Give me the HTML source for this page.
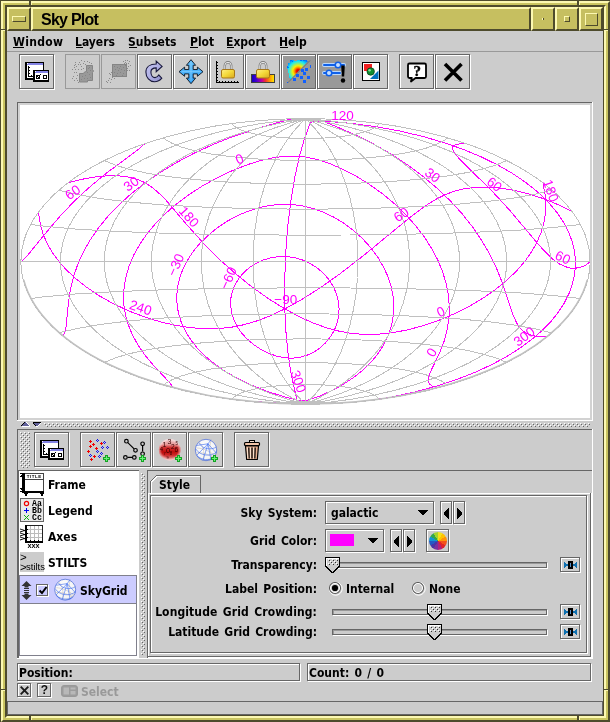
<!DOCTYPE html>
<html><head><meta charset="utf-8"><title>Sky Plot</title>
<style>
html,body{margin:0;padding:0}
body{width:610px;height:722px;position:relative;overflow:hidden;background:#cac561}
div,svg{position:absolute;box-sizing:content-box}
.t{font:bold 12px "DejaVu Sans Condensed","DejaVu Sans","Liberation Sans",sans-serif;word-spacing:1.5px;color:#000;white-space:nowrap;line-height:14px}
.t u{text-decoration:none;position:relative}
.t u:after{content:"";position:absolute;left:0;right:1px;top:12px;height:1px;background:#000}
.r{text-align:right}
.title{font:bold 16px "Liberation Sans",sans-serif;letter-spacing:-.75px;color:#000;white-space:nowrap;line-height:18px}
</style></head><body><div id="w" style="left:0;top:0;width:610px;height:722px;will-change:transform">
<div style="left:0px;top:0px;width:610px;height:722px;background:#cac561"></div>
<div style="left:0px;top:0px;width:610px;height:1px;background:#4e4b2c"></div>
<div style="left:0px;top:0px;width:1px;height:722px;background:#4e4b2c"></div>
<div style="left:1px;top:1px;width:605px;height:717px;border:2px solid;border-color:#fcf8b2 #4e4b2c #4e4b2c #fcf8b2"></div>
<div style="left:5px;top:5px;width:597px;height:709px;border:2px solid;border-color:#4e4b2c #fcf8b2 #fcf8b2 #4e4b2c"></div>
<div style="left:603px;top:5px;width:1px;height:711px;background:#4e4b2c"></div>
<div style="left:5px;top:715px;width:599px;height:1px;background:#4e4b2c"></div>
<div style="left:29px;top:1px;width:2px;height:4px;background:#4e4b2c"></div>
<div style="left:31px;top:1px;width:1px;height:4px;background:#fcf8b2"></div>
<div style="left:29px;top:716px;width:2px;height:4px;background:#4e4b2c"></div>
<div style="left:31px;top:716px;width:1px;height:4px;background:#fcf8b2"></div>
<div style="left:577px;top:1px;width:2px;height:4px;background:#4e4b2c"></div>
<div style="left:579px;top:1px;width:1px;height:4px;background:#fcf8b2"></div>
<div style="left:577px;top:716px;width:2px;height:4px;background:#4e4b2c"></div>
<div style="left:579px;top:716px;width:1px;height:4px;background:#fcf8b2"></div>
<div style="left:1px;top:29px;width:4px;height:1px;background:#4e4b2c"></div>
<div style="left:1px;top:30px;width:4px;height:1px;background:#fcf8b2"></div>
<div style="left:604px;top:29px;width:4px;height:1px;background:#4e4b2c"></div>
<div style="left:604px;top:30px;width:4px;height:1px;background:#fcf8b2"></div>
<div style="left:1px;top:689px;width:4px;height:1px;background:#4e4b2c"></div>
<div style="left:1px;top:690px;width:4px;height:1px;background:#fcf8b2"></div>
<div style="left:604px;top:689px;width:4px;height:1px;background:#4e4b2c"></div>
<div style="left:604px;top:690px;width:4px;height:1px;background:#fcf8b2"></div>
<div style="left:7px;top:7px;width:20px;height:20px;background:#c6bf60;border:2px solid;border-color:#fcf8b2 #4e4b2c #4e4b2c #fcf8b2"></div>
<div style="left:31px;top:7px;width:496px;height:20px;background:#c6bf60;border:2px solid;border-color:#fcf8b2 #4e4b2c #4e4b2c #fcf8b2"></div>
<div style="left:531px;top:7px;width:20px;height:20px;background:#c6bf60;border:2px solid;border-color:#fcf8b2 #4e4b2c #4e4b2c #fcf8b2"></div>
<div style="left:555px;top:7px;width:20px;height:20px;background:#c6bf60;border:2px solid;border-color:#fcf8b2 #4e4b2c #4e4b2c #fcf8b2"></div>
<div style="left:579px;top:7px;width:20px;height:20px;background:#c6bf60;border:2px solid;border-color:#fcf8b2 #4e4b2c #4e4b2c #fcf8b2"></div>
<div style="left:12px;top:16px;width:12px;height:4px;border:1px solid;border-color:#fcf8b2 #4e4b2c #4e4b2c #fcf8b2"></div>
<div style="left:542px;top:18px;width:1px;height:2px;background:#fcf8b2"></div>
<div style="left:543px;top:18px;width:1px;height:2px;background:#4e4b2c"></div>
<div style="left:564px;top:16px;width:4px;height:4px;border:1px solid;border-color:#fcf8b2 #4e4b2c #4e4b2c #fcf8b2"></div>
<div style="left:585px;top:13px;width:11px;height:11px;border:1px solid;border-color:#fcf8b2 #4e4b2c #4e4b2c #fcf8b2"></div>
<div class="title" style="left:41px;top:11px;">Sky Plot</div>
<div style="left:7px;top:31px;width:596px;height:684px;background:#cccccc"></div>
<div class="t" style="left:13px;top:35px;letter-spacing:.3px">Window</div>
<div style="left:13px;top:47px;width:11px;height:1px;background:#000"></div>
<div class="t" style="left:75px;top:35px;">Layers</div>
<div style="left:76px;top:47px;width:7px;height:1px;background:#000"></div>
<div class="t" style="left:128px;top:35px;">Subsets</div>
<div style="left:129px;top:47px;width:8px;height:1px;background:#000"></div>
<div class="t" style="left:190px;top:35px;">Plot</div>
<div style="left:190px;top:47px;width:8px;height:1px;background:#000"></div>
<div class="t" style="left:226px;top:35px;">Export</div>
<div style="left:227px;top:47px;width:7px;height:1px;background:#000"></div>
<div class="t" style="left:279px;top:35px;">Help</div>
<div style="left:280px;top:47px;width:8px;height:1px;background:#000"></div>
<div style="left:7px;top:51px;width:596px;height:1px;background:#999999"></div>
<div style="left:20px;top:55px;width:33px;height:33px;border:1px solid #ffffff"></div>
<div style="left:19px;top:54px;width:33px;height:33px;border:1px solid #666666"></div>
<svg style="left:19px;top:54px" width="36" height="36" viewBox="0 0 36 36"><rect x="6" y="8" width="19" height="18" fill="#000"/><rect x="8" y="9" width="16" height="2" fill="#8484e4"/><rect x="8" y="11" width="16" height="13" fill="#fff"/><rect x="8" y="9" width="1" height="1" fill="#fff"/><rect x="9" y="12" width="1" height="11" fill="#000"/><path d="M10 13h1v1h-1zM10 16h1v1h-1zM10 19h1v1h-1zM12 21h1v1h-1z" fill="#000"/><rect x="9" y="22" width="5" height="1" fill="#000"/><rect x="14" y="16" width="16" height="12" fill="#000"/><rect x="16" y="17" width="13" height="2" fill="#8484e4"/><rect x="16" y="19" width="13" height="7" fill="#fff"/><rect x="16" y="17" width="1" height="1" fill="#fff"/><rect x="17" y="21" width="4" height="4" fill="#000"/><path d="M18 23h1v1h-1zM19 22h1v1h-1zM21 20h1v1h-1z" fill="#fff"/><path d="M21 20h1v1h-1z" fill="#000"/><rect x="24" y="21" width="4" height="4" fill="#000"/><rect x="25" y="22" width="2" height="2" fill="#fff"/></svg>
<div style="left:65px;top:54px;width:33px;height:33px;border:1px solid #999999"></div>
<svg style="left:65px;top:54px" width="36" height="36" viewBox="0 0 36 36"><path d="M21.5 11.5h6v4l1 1.5-1 1.5v8h-5v1.5h-8v-8.500h4l1-1.500 2-.5z" fill="#999" stroke="#858585" stroke-width="1"/><path d="M16 6h1v1h-1zM19 7h1v1h-1zM22 7h1v1h-1zM24 8h1v1h-1zM26 9h1v1h-1zM10 8h1v1h-1zM14 8h1v1h-1zM13 10h1v1h-1zM18 9h1v1h-1zM9 11h1v1h-1zM11 12h1v1h-1zM16 12h1v1h-1zM9 13h1v1h-1zM7 15h1v1h-1zM10 15h1v1h-1zM13 15h1v1h-1zM16 15h1v1h-1zM18 14h1v1h-1zM9 18h1v1h-1zM11 18h1v1h-1zM12 21h1v1h-1zM8 22h1v1h-1zM7 24h1v1h-1zM11 24h1v1h-1zM9 26h1v1h-1zM12 26h1v1h-1zM13 28h1v1h-1zM10 10h1v1h-1zM15 10h1v1h-1zM20 10h1v1h-1z" fill="#8a8a8a"/><path d="M23 14h1v1h-1zM25 16h1v1h-1zM22 18h1v1h-1zM24 20h1v1h-1zM20 21h1v1h-1zM17 22h1v1h-1zM19 24h1v1h-1zM22 24h1v1h-1zM16 25h1v1h-1zM25 23h1v1h-1zM21 16h1v1h-1zM24 13h1v1h-1z" fill="#848484"/></svg>
<div style="left:101px;top:54px;width:33px;height:33px;border:1px solid #999999"></div>
<svg style="left:101px;top:54px" width="36" height="36" viewBox="0 0 36 36"><rect x="11.5" y="10.5" width="14" height="12" fill="#999" stroke="#858585"/><path d="M5 27h1v1h-1zM6 28h1v1h-1zM7 26h1v1h-1zM9 28h1v1h-1zM8 24h1v1h-1zM10 25h1v1h-1zM11 23h1v1h-1zM13 24h1v1h-1zM9 20h1v1h-1zM10 18h1v1h-1zM8 19h1v1h-1zM22 7h1v1h-1zM24 6h1v1h-1zM26 6h1v1h-1zM28 7h1v1h-1zM23 9h1v1h-1zM25 9h1v1h-1zM27 9h1v1h-1zM29 11h1v1h-1zM27 12h1v1h-1zM26 14h1v1h-1zM28 16h1v1h-1zM26 16h1v1h-1zM24 8h1v1h-1zM22 10h1v1h-1z" fill="#8a8a8a"/><path d="M13 12h1v1h-1zM16 13h1v1h-1zM19 12h1v1h-1zM22 13h1v1h-1zM14 15h1v1h-1zM17 16h1v1h-1zM20 15h1v1h-1zM23 16h1v1h-1zM13 18h1v1h-1zM16 19h1v1h-1zM19 18h1v1h-1zM22 19h1v1h-1zM15 21h1v1h-1zM21 21h1v1h-1zM24 11h1v1h-1zM18 14h1v1h-1z" fill="#848484"/></svg>
<div style="left:138px;top:55px;width:33px;height:33px;border:1px solid #ffffff"></div>
<div style="left:137px;top:54px;width:33px;height:33px;border:1px solid #666666"></div>
<svg style="left:137px;top:54px" width="36" height="36" viewBox="0 0 36 36"><defs><linearGradient id="rg" x1="0" y1="0" x2="1" y2="1"><stop offset="0" stop-color="#c8c8f4"/><stop offset=".5" stop-color="#b0b0e4"/><stop offset="1" stop-color="#8c8cc8"/></linearGradient></defs><path d="M19.200 7.100L25.100 12.400L19.200 17.700V13.900C16 13.900 13.900 15.500 13.900 18C13.900 21 15.500 23.600 18 23.600C19.500 23.600 20.800 22.500 21.800 21L24.800 24.200C23 26.500 20.500 27.800 17.500 27.800C12.500 27.800 8.900 23.500 8.900 18C8.900 13 13 10 19.200 10Z" fill="url(#rg)" stroke="#18183c" stroke-width="1.100" stroke-linejoin="miter"/></svg>
<div style="left:174px;top:55px;width:33px;height:33px;border:1px solid #ffffff"></div>
<div style="left:173px;top:54px;width:33px;height:33px;border:1px solid #666666"></div>
<svg style="left:173px;top:54px" width="36" height="36" viewBox="0 0 36 36"><defs><linearGradient id="mg" x1="0" y1="0" x2="0" y2="1"><stop offset="0" stop-color="#68c4ff"/><stop offset="1" stop-color="#2c9cf4"/></linearGradient></defs><path d="M18 5.700L22.600 11.300H20.200V15.500H24.400V13.100L30 17.700L24.400 22.300V19.900H20.200V24.100H22.600L18 29.700L13.400 24.100H15.800V19.900H11.600V22.300L6 17.700L11.600 13.100V15.500H15.800V11.300H13.400Z" fill="url(#mg)" stroke="#0c1420" stroke-width=".9" stroke-linejoin="miter"/><path d="M18 8v19M8.500 17.700h19" stroke="#9cdcff" stroke-width=".8" opacity=".7"/></svg>
<div style="left:210px;top:55px;width:33px;height:33px;border:1px solid #ffffff"></div>
<div style="left:209px;top:54px;width:33px;height:33px;border:1px solid #666666"></div>
<svg style="left:209px;top:54px" width="36" height="36" viewBox="0 0 36 36"><g shape-rendering="crispEdges"><rect x="7" y="7" width="1" height="22" fill="#000"/><rect x="7" y="28" width="23" height="1" fill="#000"/><path d="M8 8h1v1h-1zM8 11h1v1h-1zM8 14h1v1h-1zM8 17h1v1h-1zM8 20h1v1h-1zM8 23h1v1h-1zM8 26h1v1h-1zM10 27h1v1h-1zM13 27h1v1h-1zM16 27h1v1h-1zM19 27h1v1h-1zM22 27h1v1h-1zM25 27h1v1h-1zM28 27h1v1h-1z" fill="#000"/></g><path d="M15.8 15.500 V11.500 a3.200 3.200 0 0 1 6.400 0 V15.500" fill="none" stroke="#7c7c7c" stroke-width="2.400"/><path d="M15.8 15.500 V11.500 a3.200 3.200 0 0 1 6.400 0 V15.500" fill="none" stroke="#e8e8e8" stroke-width="1"/><defs><linearGradient id="pg19" x1="0" y1="0" x2="1" y2="1"><stop offset="0" stop-color="#fff088"/><stop offset=".5" stop-color="#f4d838"/><stop offset="1" stop-color="#d8a820"/></linearGradient></defs><rect x="12.5" y="15.500" width="13" height="8.500" rx="1.500" fill="url(#pg19)" stroke="#a87818" stroke-width="1"/></svg>
<div style="left:246px;top:55px;width:33px;height:33px;border:1px solid #ffffff"></div>
<div style="left:245px;top:54px;width:33px;height:33px;border:1px solid #666666"></div>
<svg style="left:245px;top:54px" width="36" height="36" viewBox="0 0 36 36"><defs><linearGradient id="ramp" x1="0" y1="0" x2="1" y2="0"><stop offset="0" stop-color="#1000c0"/><stop offset=".2" stop-color="#4000d0"/><stop offset=".45" stop-color="#c000a0"/><stop offset=".6" stop-color="#f03030"/><stop offset=".8" stop-color="#ff9800"/><stop offset="1" stop-color="#fff000"/></linearGradient></defs><rect x="6.500" y="20.500" width="23" height="8" fill="url(#ramp)" stroke="#404040" stroke-width="1" shape-rendering="crispEdges"/><path d="M14.8 15.500 V11.500 a3.200 3.200 0 0 1 6.400 0 V15.500" fill="none" stroke="#7c7c7c" stroke-width="2.400"/><path d="M14.8 15.500 V11.500 a3.200 3.200 0 0 1 6.400 0 V15.500" fill="none" stroke="#e8e8e8" stroke-width="1"/><defs><linearGradient id="pg18" x1="0" y1="0" x2="1" y2="1"><stop offset="0" stop-color="#fff088"/><stop offset=".5" stop-color="#f4d838"/><stop offset="1" stop-color="#d8a820"/></linearGradient></defs><rect x="11.5" y="15.500" width="13" height="8.500" rx="1.500" fill="url(#pg18)" stroke="#a87818" stroke-width="1"/></svg>
<div style="left:283px;top:56px;width:32px;height:32px;background:#999999"></div>
<div style="left:282px;top:55px;width:33px;height:33px;border:1px solid #ffffff"></div>
<div style="left:281px;top:54px;width:33px;height:33px;border:1px solid #666666"></div>
<svg style="left:281px;top:54px" width="36" height="36" viewBox="0 0 36 36"><defs><radialGradient id="dg" cx="17.200" cy="17.200" r="13.500" gradientUnits="userSpaceOnUse"><stop offset="0" stop-color="#c80000"/><stop offset=".14" stop-color="#f01000"/><stop offset=".27" stop-color="#ff9000"/><stop offset=".4" stop-color="#f8f000"/><stop offset=".55" stop-color="#90f070"/><stop offset=".72" stop-color="#20e8f0"/><stop offset=".9" stop-color="#00a0ff"/><stop offset="1" stop-color="#0060ff"/></radialGradient></defs><path d="M9 6h4v1h3v-1h9v1h2L9 26v-2h-1v-5h-1v-4h-1v-3h1v-3h2z" fill="url(#dg)"/><path d="M9 6h1v1h-1zM10 6h1v1h-1zM11 7h1v1h-1zM6 12h1v1h-1zM6 13h1v1h-1zM7 13h1v1h-1zM25 6h1v1h-1zM22 6h1v1h-1zM23 6h1v1h-1zM19 6h1v1h-1zM20 6h1v1h-1z" fill="#0070ff"/><path d="M6.500 29L29 6.500" stroke="#606060" stroke-width=".7"/><rect x="24" y="14" width="3" height="3" fill="#1060ff"/><rect x="22" y="18" width="3" height="3" fill="#1060ff"/><rect x="19" y="22" width="3" height="3" fill="#1060ff"/><rect x="26" y="22" width="3" height="3" fill="#1060ff"/><rect x="22" y="26" width="3" height="3" fill="#1060ff"/><rect x="12" y="24" width="3" height="3" fill="#1060ff"/><rect x="15" y="20" width="3" height="3" fill="#1060ff"/><rect x="20" y="15" width="3" height="3" fill="#1060ff"/><rect x="29" y="11" width="1" height="3" fill="#1060ff"/><rect x="6" y="28" width="1" height="1" fill="#1060ff"/></svg>
<div style="left:319px;top:56px;width:32px;height:32px;background:#999999"></div>
<div style="left:318px;top:55px;width:33px;height:33px;border:1px solid #ffffff"></div>
<div style="left:317px;top:54px;width:33px;height:33px;border:1px solid #666666"></div>
<svg style="left:317px;top:54px" width="36" height="36" viewBox="0 0 36 36"><g shape-rendering="auto"><path d="M7 11h20M7 19h16" stroke="#b8d8ff" stroke-width="4" stroke-linecap="round"/><path d="M7 11h20M7 19h16" stroke="#1060e8" stroke-width="2" stroke-linecap="round"/><circle cx="21" cy="11" r="2.800" fill="#c8e0ff" stroke="#1060e8" stroke-width="1.600"/><circle cx="12" cy="19" r="2.800" fill="#c8e0ff" stroke="#1060e8" stroke-width="1.600"/><path d="M24.200 11.500h3.600l-.6 11h-2.400z" fill="#000"/><circle cx="26" cy="26.500" r="2.200" fill="#000"/></g></svg>
<div style="left:354px;top:55px;width:33px;height:33px;border:1px solid #ffffff"></div>
<div style="left:353px;top:54px;width:33px;height:33px;border:1px solid #666666"></div>
<svg style="left:353px;top:54px" width="36" height="36" viewBox="0 0 36 36"><rect x="9.500" y="8.500" width="17" height="18" fill="#fff" stroke="#000"/><rect x="11" y="10" width="8" height="7" fill="#f02020"/><path d="M17 25h8.500v-8.500z" fill="#0070c0"/><g shape-rendering="auto"><circle cx="17.700" cy="17.500" r="3.700" fill="#109030" stroke="#084018" stroke-width=".8"/><circle cx="16.600" cy="16.300" r="1.200" fill="#90e0a0"/></g></svg>
<div style="left:400px;top:55px;width:33px;height:33px;border:1px solid #ffffff"></div>
<div style="left:399px;top:54px;width:33px;height:33px;border:1px solid #666666"></div>
<svg style="left:399px;top:54px" width="36" height="36" viewBox="0 0 36 36"><g shape-rendering="auto"><path d="M10.500 9.500h15a1.500 1.500 0 0 1 1.500 1.500v11.500a1.500 1.500 0 0 1-1.500 1.500h-9l-4.500 3.500.8-3.500h-2.300a1.500 1.500 0 0 1-1.500-1.500V11a1.500 1.500 0 0 1 1.500-1.500z" fill="#fff" stroke="#000" stroke-width="1.800" stroke-linejoin="round"/></g><text x="18.200" y="22" text-anchor="middle" font-family="Liberation Serif, serif" font-weight="bold" font-size="15" fill="#000" stroke="#000" stroke-width=".4">?</text></svg>
<div style="left:436px;top:55px;width:33px;height:33px;border:1px solid #ffffff"></div>
<div style="left:435px;top:54px;width:33px;height:33px;border:1px solid #666666"></div>
<svg style="left:435px;top:54px" width="36" height="36" viewBox="0 0 36 36"><g shape-rendering="auto"><path d="M10 10L26.500 26.500M26.500 10L10 26.500" stroke="#000" stroke-width="3.600"/></g></svg>
<div style="left:17px;top:102px;width:576px;height:319px;background:#d2d2d2"></div>
<div style="left:17px;top:102px;width:575px;height:1px;background:#666666"></div>
<div style="left:17px;top:102px;width:1px;height:318px;background:#666666"></div>
<div style="left:592px;top:102px;width:1px;height:319px;background:#ffffff"></div>
<div style="left:17px;top:420px;width:576px;height:1px;background:#ffffff"></div>
<div style="left:20px;top:105px;width:570px;height:313px;background:#ffffff"></div>
<svg style="left:20px;top:105px" width="570" height="313" viewBox="20 105 570 313" shape-rendering="crispEdges"><path d="M284.8 308.9 299.7 316.9 313.7 323.2 327.1 328 340 331.4 352.3 333.5 365 334.4 378.1 334.2 392 332.8 406.9 330 422.5 325.9 438.6 320.4 454.5 313.7 469.3 306.3 483.4 297.9 496 289.1 507.2 280 516.7 270.7 524.8 261.4 531.5 251.9 536.8 242.5 540.9 233 543.7 223.5 545.3 214.1 545.7 204.6 545.5 199.4M284.8 308.9 301.3 299.8 319.6 288.2 340.4 273.5 364.1 255.1 410.2 217.2 424.4 206.5 435.3 199.6 445 194.7 454.4 191.2 464.1 188.8 474.6 187.4 486.5 187.1 499.2 188 513.3 190.2 528 193.7 543 198.5 545.5 199.4M284.8 308.9 284.7 281.6 285.7 253.4 287.8 225.8 291 199.8 295 176.1 299.6 155.6 304.6 138.4 309 126.3 310.9 122.7 312.5 121.6 315.5 121 328.5 121.4 352.4 123.5 376.5 126.8 400.1 131.1 422.9 136.5 443.5 142.5 463.1 149.3 481.4 157 497.5 164.9 512.4 173.4 525.1 182 536.5 191 545.5 199.4M284.8 308.9 268.8 298.9 252.2 287.1 235.9 274 219.6 259.5 204 243.8 187.8 225.8 165.4 199.6 157.1 191.4 150.1 185.9 143.2 181.8 136 178.9 127.9 176.9 118.3 175.8 107.1 175.8 94.2 177.1 80.2 179.6 68.6 182.6M542.9 182.7 545 194 545.5 199.4M284.8 308.9 270.1 315.9 256.6 321 243.6 324.8 231.1 327.3 218.2 328.6 204.7 328.8 190.8 327.7 175.9 325.4 160.2 321.8 144.4 316.9 128.7 310.9 113.6 303.8 99.6 296 87.1 287.6 76 278.9 66.5 270 58.5 261 52 252 47 243.1 43.1 234.1 40.5 225 39 216 38.7 212M572.2 211.7 559 205 545.5 199.4M284.8 308.9 286.1 334.2 288.4 356.6 291.5 375.8 295.3 392.7 297.1 400.2 296.8 401.5 295.3 402.2 288.9 402.7 266.9 402.3 243.1 400.8M369.1 400.7 392.3 396.9 414.7 392 436.2 386.2 456.5 379.6 474.7 372.5 491.6 364.7 507.1 356.3 520.5 347.8 532.6 338.8 542.7 330 551.5 320.8 558.5 311.9 564.4 302.8 569 293.6 572.2 284.8 574.3 276 575.4 267.1 575.3 258.2 574.1 249.3 571.8 240.5 568.2 231.1 563.3 222 557.3 213 549.6 203.7 545.5 199.4M334.4 330.1 337.1 323.1 338.7 315.9 339.1 308.7 338.4 301.3 336.5 293.8 333.4 286.8 329.2 280 324 273.9 317.8 268.4 310.8 263.8 303.5 260.3 295.7 257.9 287.7 256.6 279.6 256.5 271.6 257.6 263.8 259.8 256.4 263.1 249.6 267.4 243.8 272.5 238.9 278.2 235.1 284.6 232.4 291.2 230.9 298 230.6 304.8 231.4 311.7 233.4 318.6 236.5 325.4 241 332.2 246.6 338.5 253.4 344.4 261 349.5 269.1 353.5 277.2 356.3 285.1 357.9 292.6 358.2 299.9 357.3 306.9 355.3 313.6 352.2 319.9 348 325.6 342.8 330.5 336.7 334.4 330.1M389.1 333.2 391.8 324.1 393.4 314.9 393.8 305.4 393 295.9 391 286.2 387.8 276.3 383.4 266.7 377.7 257.1 370.8 247.7 362.8 238.9 354 230.8 344.3 223.5 334.1 217.3 323.6 212.3 313.2 208.5 302.9 206 292.3 204.5 281.7 204.3 270.9 205.3 260.2 207.4 249.1 210.8 238 215.4 227.2 221.2 217 228 207.7 235.7 199.5 243.8 192.6 252.3 187.1 260.9 182.6 269.8 179.4 278.8 177.5 287.6 176.7 296.5 177.1 305.2 178.6 313.9 181.4 322.6 185.4 331.2 190.7 339.7 197.3 348.1 205.3 356.2 214.6 364 225.4 371.5 237.6 378.6 251.2 385.1 266.8 391.3 283.7 396.6 297.7 400.1 303.6 400.7 308.2 400.1 317.6 396.9 330.8 391.1 342.9 384.6 353.6 377.5 363 370.1 371 362.2 377.7 354.1 383.2 345.7 387.5 337.2 389.1 333.2M449.1 316.2 449.2 305.1 448.2 294 445.9 282.7 442.5 271.4 437.8 260.1 431.7 248.6 424.5 237.2 415.7 225.8 405.8 214.7 394.4 203.7 382 193.4 368.6 183.8 354.9 175.5 341.3 168.5 328.5 163.1 317 159.4 306.5 157.2 296.4 156.1 286.1 156.2 274.9 157.5 262.3 160.1 248.2 164.4 232.9 170.3 217.3 177.7 202.2 186.1 188.5 195 175.8 204.5 164.7 214.3 154.7 224.6 146.3 234.8 139.2 245.3 133.5 255.5 129.1 266 126.1 276.1 124.2 286.2 123.5 296.3 124 305.9 125.7 315.9 128.6 325.6 132.5 335.1 137.8 344.7 144.5 354.5 153.2 365 170 383 172.8 387.2 173 387.8M437.9 387.9 432.8 386.3 430 384.5 428.6 382.5 428.1 379.9 428.8 376 431.9 368.8 440.1 351.8 444.3 340.7 447.1 330 448.8 319.4 449.1 316.2M502.7 283.8 496.6 268.4 489.6 254.1 481.8 240.6 472.8 227.3 462.3 214 450.7 201.3 437.7 188.8 423.4 176.7 408.2 165.3 391.8 154.5 374.1 144.3 355.9 135.2 336.2 126.6 320.4 120.2 319.6 119.5 320 118.9 290.5 119 278.6 122.4 255.1 129.1 233.7 136.3 213.3 144.4 194.1 153.2 176.2 162.7 159.7 172.7 144.6 183.2 130.9 194 118.6 205.2 107.7 216.6 98.3 228.2 90.3 239.8 83.7 251.4 78.2 263.2 74 275.2 70.8 287.5 68.6 301.2 66 326.7 64.5 333.1 63.1 336.3M547.6 336.4 539.7 336.6 533.3 335.8 528.1 334.1 523.8 331.5 520 327.9 516.7 322.9 513.2 315.3 506.9 296.3 502.7 283.8M536.8 242.5 509.8 210.4 492.8 191.9 470.9 170.3 458.2 157.5 454 152.1 452.6 149 452.7 147 453.8 145.5 456.4 144.3 461.7 143.6 465.8 143.6M144.9 143.6 138.4 149.3 105.6 173.8 89 187.6 74.2 201.3 60.4 215.8 46.1 232.6 28.1 254.7 21.3 261.6 20.9 262M590 262.1 585.3 265.3 580.3 267.4 575.3 268.2 570.1 268 564.7 266.5 559 263.7 552.7 259.1 545 251.7 536.8 242.5" fill="none" stroke="#ff00ff" stroke-width="1"/><path d="M305.5 404.3 330.3 403.8 354.9 402.2 379.2 399.5 402.8 395.7 425.8 391 447.8 385.2 468.7 378.5 484.6 372.5 499.6 366 513.6 358.9 526.7 351.4 538.6 343.4 549.4 335.1 559.1 326.3 567.5 317.3 574.6 308 579.1 300.9 582.8 293.6 585.8 286.3 588 278.9 589.4 271.5 590.1 264 589.9 256.5 589 249.1 587.3 241.6 584.9 234.2 581.6 226.9 577.7 219.7 572.9 212.6 565.5 203.4 556.8 194.4 546.9 185.8 535.7 177.5 523.5 169.7 510.2 162.3 495.9 155.4 480.7 148.9 464.6 143.1 443.5 136.6 421.3 131 398.2 126.4 374.4 122.9 350 120.4 325.4 119 305.5 118.7M305.5 404.3 329.2 402.2 352.2 399.1 374.4 395.1 395.6 390.1 415.8 384.4 434.8 377.9 452.6 370.7 469.1 362.8 484.2 354.4 497.9 345.4 507.7 337.8 516.6 330 524.5 322 531.3 313.7 537.2 305.3 542 296.7 545.7 288 548.4 279.2 550 270.4 550.5 261.5 550 252.6 548.4 243.8 545.7 235 542 226.3 537.2 217.7 531.3 209.3 524.5 201 516.6 193 507.7 185.2 497.9 177.6 484.2 168.6 469.1 160.2 452.6 152.3 434.8 145.1 415.8 138.6 395.6 132.9 374.4 127.9 352.2 123.9 329.2 120.8 305.5 118.7M305.5 404.3 326.5 400.8 346.6 396.4 365.5 391.3 383.4 385.5 400.1 379.1 415.7 372.1 430.1 364.6 443.3 356.7 455.3 348.3 466 339.6 475.6 330.5 483.8 321.2 490.8 311.6 496.5 301.8 501 291.9 504.2 281.8 505.8 273.7 506.6 265.6 506.6 257.4 505.8 249.3 504.2 241.2 501 231.1 496.5 221.2 490.8 211.4 483.8 201.8 475.6 192.5 466 183.4 455.3 174.7 443.3 166.3 430.1 158.4 415.7 150.9 400.1 143.9 383.4 137.5 365.5 131.7 346.6 126.6 326.5 122.2 305.5 118.7M305.5 404.3 322.5 399.6 338.5 394.3 353.4 388.3 367.3 381.9 380.1 375.1 392 367.8 402.9 360.2 412.8 352.2 421.7 344 429.7 335.4 436.7 326.7 442.7 317.7 447.9 308.6 452.1 299.4 455.3 290 457.7 280.5 459.1 271 459.5 261.5 459.1 252 457.7 242.5 455.3 233 452.1 223.6 447.9 214.4 442.7 205.3 436.7 196.3 429.7 187.6 421.7 179 412.8 170.8 402.9 162.8 392 155.2 380.1 147.9 367.3 141.1 353.4 134.7 338.5 128.7 322.5 123.4 305.5 118.7M305.5 404.3 319.7 397.5 332.7 390.1 344.6 382.2 355.3 373.7 364.9 364.8 373.6 355.6 381.3 346 388 336.1 393.8 325.9 398.7 315.5 403.2 303.1 406.5 290.6 408.7 277.9 409.6 265.1 409.4 252.4 407.9 239.6 405.3 227 401.4 214.5 397.1 204 391.9 193.7 385.8 183.6 378.8 173.8 370.8 164.3 361.8 155.2 351.8 146.4 340.7 138.1 328.5 130.4 315.1 123.1 305.5 118.7M305.5 404.3 314 395.6 321.5 386.3 328.3 376.4 335 364.6 340.8 352.2 345.6 339.4 350.1 324.4 353.6 309 356.1 293.4 357.5 277.5 358 261.5 357.5 245.5 356.1 229.6 353.6 214 350.1 198.6 345.6 183.6 340.8 170.8 335 158.4 328.3 146.6 321.5 136.7 314 127.4 305.5 118.7M305.5 404.3 305.5 345.3 305.5 286.1 305.5 226.4 305.5 166.7 305.5 118.7M305.5 404.3 297 395.6 289.5 386.3 282.7 376.4 276 364.6 270.2 352.2 265.4 339.4 260.9 324.4 257.4 309 254.9 293.4 253.5 277.5 253 261.5 253.5 245.5 254.9 229.6 257.4 214 260.9 198.6 265.4 183.6 270.2 170.8 276 158.4 282.7 146.6 289.5 136.7 297 127.4 305.5 118.7M305.5 404.3 291.3 397.5 278.3 390.1 266.4 382.2 255.7 373.7 246.1 364.8 237.4 355.6 229.7 346 223 336.1 217.2 325.9 212.3 315.5 207.8 303.1 204.5 290.6 202.3 277.9 201.4 265.1 201.6 252.4 203.1 239.6 205.7 227 209.6 214.5 213.9 204 219.1 193.7 225.2 183.6 232.2 173.8 240.2 164.3 249.2 155.2 259.2 146.4 270.3 138.1 282.5 130.4 295.9 123.1 305.5 118.7M305.5 404.3 288.5 399.6 272.5 394.3 257.6 388.3 243.7 381.9 230.9 375.1 219 367.8 208.1 360.2 198.2 352.2 189.3 344 181.3 335.4 174.3 326.7 168.3 317.7 163.1 308.6 158.9 299.4 155.7 290 153.3 280.5 151.9 271 151.5 261.5 151.9 252 153.3 242.5 155.7 233 158.9 223.6 163.1 214.4 168.3 205.3 174.3 196.3 181.3 187.6 189.3 179 198.2 170.8 208.1 162.8 219 155.2 230.9 147.9 243.7 141.1 257.6 134.7 272.5 128.7 288.5 123.4 305.5 118.7M305.5 404.3 284.5 400.8 264.4 396.4 245.5 391.3 227.6 385.5 210.9 379.1 195.3 372.1 180.9 364.6 167.7 356.7 155.7 348.3 145 339.6 135.4 330.5 127.2 321.2 120.2 311.6 114.5 301.8 110 291.9 106.8 281.8 105.2 273.7 104.4 265.6 104.4 257.4 105.2 249.3 106.8 241.2 110 231.1 114.5 221.2 120.2 211.4 127.2 201.8 135.4 192.5 145 183.4 155.7 174.7 167.7 166.3 180.9 158.4 195.3 150.9 210.9 143.9 227.6 137.5 245.5 131.7 264.4 126.6 284.5 122.2 305.5 118.7M305.5 404.3 281.8 402.2 258.8 399.1 236.6 395.1 215.4 390.1 195.2 384.4 176.2 377.9 158.4 370.7 141.9 362.8 126.8 354.4 113.1 345.4 103.3 337.8 94.4 330 86.5 322 79.7 313.7 73.8 305.3 69 296.7 65.3 288 62.6 279.2 61 270.4 60.5 261.5 61 252.6 62.6 243.8 65.3 235 69 226.3 73.8 217.7 79.7 209.3 86.5 201 94.4 193 103.3 185.2 113.1 177.6 126.8 168.6 141.9 160.2 158.4 152.3 176.2 145.1 195.2 138.6 215.4 132.9 236.6 127.9 258.8 123.9 281.8 120.8 305.5 118.7M305.5 404.3 280.7 403.8 256.1 402.2 231.8 399.5 208.2 395.7 185.2 391 163.2 385.2 142.3 378.5 126.4 372.5 111.4 366 97.4 358.9 84.3 351.4 72.4 343.4 61.6 335.1 51.9 326.3 43.5 317.3 36.4 308 31.9 300.9 28.2 293.6 25.2 286.3 23 278.9 21.6 271.5 20.9 264 21.1 256.5 22 249.1 23.7 241.6 26.1 234.2 29.4 226.9 33.3 219.7 38.1 212.6 45.5 203.4 54.2 194.4 64.1 185.8 75.3 177.5 87.5 169.7 100.8 162.3 115.1 155.4 130.3 148.9 146.4 143.1 167.5 136.6 189.7 131 212.8 126.4 236.6 122.9 261 120.4 285.6 119 305.5 118.7M379.2 399.5 377.2 397 373.2 394.4 366.6 391.7 356.5 389 342.4 386.6 324.8 385 304.9 384.5 285.1 385.1 267.6 386.8 254.1 389.1 244.1 391.8 237.6 394.5 233.7 397.2 231.8 399.5M447.8 385.2 443 381.8 435.9 378.3 425.9 374.8 412.1 371.3 393.7 368.1 371.5 365.4 344.7 363.5 314.6 362.6 284.3 362.8 255.6 364.1 230.4 366.4 209.9 369.2 193.1 372.6 180.7 376.2 171.6 379.9 165.6 383.4 163.2 385.2M506.7 362.5 497.2 358.4 484.2 354.4 467.5 350.5 446.7 347 420.5 343.8 388.6 341.3 350.9 339.5 309.5 338.8 268 339.3 230.1 340.8 196.5 343.3 168.7 346.4 146.5 349.9 129.4 353.7 116.1 357.6 106.2 361.6 104.3 362.5M552 332.9 536.1 329 516 325.3 490.3 321.9 456.8 318.7 416.6 316.3 368.1 314.5 313.4 313.8 258.4 314.2 207.8 315.7 165.4 317.9 129.8 320.9 102.1 324.2 80.3 327.9 63.8 331.6 59 332.9M580.4 298.5 553.5 295.5 516.9 292.7 467.8 290.4 408.6 288.8 349.9 288 290.1 287.9 230.7 288.4 171.5 289.5 115.9 291.6 73.4 294.1 42.5 297 30.6 298.5M590.1 261.5 530.6 261.5 470.8 261.5 411.4 261.5 352.8 261.5 293.2 261.5 233.9 261.5 174.5 261.5 115 261.5 56.3 261.5 20.9 261.5M580.4 224.5 553.5 227.5 516.9 230.3 467.8 232.6 408.6 234.2 349.9 235 290.1 235.1 230.7 234.6 171.5 233.5 115.9 231.4 73.4 228.9 42.5 226 30.6 224.5M552 190.1 536.1 194 516 197.7 490.3 201.1 456.8 204.3 416.6 206.7 368.1 208.5 313.4 209.2 258.4 208.8 207.8 207.3 165.4 205.1 129.8 202.1 102.1 198.8 80.3 195.1 63.8 191.4 59 190.1M506.7 160.5 497.2 164.6 484.2 168.6 467.5 172.5 446.7 176 420.5 179.2 388.6 181.7 350.9 183.5 309.5 184.2 268 183.7 230.1 182.2 196.5 179.7 168.7 176.6 146.5 173.1 129.4 169.3 116.1 165.4 106.2 161.4 104.3 160.5M447.8 137.8 443 141.2 435.9 144.7 425.9 148.2 412.1 151.7 393.7 154.9 371.5 157.6 344.7 159.5 314.6 160.4 284.3 160.2 255.6 158.9 230.4 156.6 209.9 153.8 193.1 150.4 180.7 146.8 171.6 143.1 165.6 139.6 163.2 137.8M379.2 123.5 377.2 126 373.2 128.6 366.6 131.3 356.5 134 342.4 136.4 324.8 138 304.9 138.5 285.1 137.9 267.6 136.2 254.1 133.9 244.1 131.2 237.6 128.5 233.7 125.8 231.8 123.5" fill="none" stroke="#c0c0c0" stroke-width="1"/><path d="M23.71 280A284.19 142.43 0 0 0 587.29 280" fill="none" stroke="#c0c0c0" stroke-width="1.600" shape-rendering="auto"/><path d="M291 118h30v3h-30zM283 120h46v1h-46zM276 402h60v2h-60zM290 401h32v1h-32z" fill="#c0c0c0"/><g fill="#ff00ff" font-family="Liberation Sans, sans-serif" font-size="13.500"><text transform="translate(342.6,114.6) rotate(0)" y="4.900" text-anchor="middle">120</text><text transform="translate(72.5,192) rotate(-36)" y="4.900" text-anchor="middle">60</text><text transform="translate(131,183.6) rotate(-36)" y="4.900" text-anchor="middle">30</text><text transform="translate(239.5,158.9) rotate(-22)" y="4.900" text-anchor="middle">0</text><text transform="translate(189.2,216.6) rotate(48)" y="4.900" text-anchor="middle">180</text><text transform="translate(175.4,264.8) rotate(-66)" y="4.900" text-anchor="middle">−30</text><text transform="translate(228,278.1) rotate(-65)" y="4.900" text-anchor="middle">−60</text><text transform="translate(285.7,299.5) rotate(0)" y="4.900" text-anchor="middle">−90</text><text transform="translate(140.7,307.4) rotate(18.4)" y="4.900" text-anchor="middle">240</text><text transform="translate(298.6,381.3) rotate(71)" y="4.900" text-anchor="middle">300</text><text transform="translate(432.8,175) rotate(38)" y="4.900" text-anchor="middle">30</text><text transform="translate(401.1,214.4) rotate(-33)" y="4.900" text-anchor="middle">60</text><text transform="translate(494.6,184.2) rotate(37.5)" y="4.900" text-anchor="middle">60</text><text transform="translate(551.1,190.6) rotate(70.5)" y="4.900" text-anchor="middle">180</text><text transform="translate(563,257.2) rotate(25)" y="4.900" text-anchor="middle">60</text><text transform="translate(440.7,311.5) rotate(-24)" y="4.900" text-anchor="middle">0</text><text transform="translate(431.5,352.2) rotate(-60)" y="4.900" text-anchor="middle">0</text><text transform="translate(524.1,336.4) rotate(-37)" y="4.900" text-anchor="middle">300</text></g></svg>
<svg style="left:20px;top:421px" width="24" height="7" viewBox="0 0 24 7" shape-rendering="crispEdges"><rect x="5" y="1" width="1" height="1" fill="#62629a"/><rect x="4" y="2" width="3" height="1" fill="#62629a"/><rect x="3" y="3" width="5" height="1" fill="#62629a"/><rect x="2" y="4" width="7" height="1" fill="#62629a"/><path d="M4 1h1v1h-1zM3 2h1v1h-1zM2 3h1v1h-1zM1 4h1v1h-1z" fill="#000"/><rect x="2" y="5" width="8" height="1" fill="#fff"/><path d="M6 1h1v1h-1zM7 2h1v1h-1zM8 3h1v1h-1zM9 4h1v1h-1z" fill="#fff"/><rect x="13" y="1" width="8" height="1" fill="#000"/><rect x="14" y="2" width="6" height="1" fill="#62629a"/><rect x="15" y="3" width="4" height="1" fill="#62629a"/><rect x="16" y="4" width="2" height="1" fill="#62629a"/><path d="M13 2h1v1h-1zM14 3h1v1h-1zM15 4h1v1h-1z" fill="#000"/><path d="M20 2h1v1h-1zM19 3h1v1h-1zM18 4h1v1h-1zM17 5h1v1h-1zM16 5h1v1h-1z" fill="#fff"/></svg>
<svg style="left:44px;top:423px" width="546" height="4" viewBox="0 0 546 4" shape-rendering="crispEdges"><defs><pattern id="b44_423" x="0" y="0" width="4" height="4" patternUnits="userSpaceOnUse"><path d="M0 0h1v1h-1zM2 2h1v1h-1z" fill="#ffffff"/><path d="M1 1h1v1h-1zM3 3h1v1h-1z" fill="#666666"/></pattern></defs><rect width="546" height="4" fill="url(#b44_423)"/></svg>
<div style="left:17px;top:429px;width:575px;height:1px;background:#666666"></div>
<div style="left:17px;top:429px;width:1px;height:229px;background:#666666"></div>
<div style="left:592px;top:429px;width:1px;height:230px;background:#ffffff"></div>
<div style="left:17px;top:658px;width:576px;height:1px;background:#ffffff"></div>
<svg style="left:20px;top:432px" width="10" height="36" viewBox="0 0 10 36" shape-rendering="crispEdges"><defs><pattern id="b20_432" x="0" y="0" width="4" height="4" patternUnits="userSpaceOnUse"><path d="M0 0h1v1h-1zM2 2h1v1h-1z" fill="#ffffff"/><path d="M1 1h1v1h-1zM3 3h1v1h-1z" fill="#666666"/></pattern></defs><rect width="10" height="36" fill="url(#b20_432)"/></svg>
<div style="left:35px;top:433px;width:33px;height:33px;border:1px solid #ffffff"></div>
<div style="left:34px;top:432px;width:33px;height:33px;border:1px solid #666666"></div>
<svg style="left:34px;top:432px" width="36" height="36" viewBox="0 0 36 36"><rect x="6" y="8" width="19" height="18" fill="#000"/><rect x="8" y="9" width="16" height="2" fill="#8484e4"/><rect x="8" y="11" width="16" height="13" fill="#fff"/><rect x="8" y="9" width="1" height="1" fill="#fff"/><rect x="9" y="12" width="1" height="11" fill="#000"/><path d="M10 13h1v1h-1zM10 16h1v1h-1zM10 19h1v1h-1zM12 21h1v1h-1z" fill="#000"/><rect x="9" y="22" width="5" height="1" fill="#000"/><rect x="14" y="16" width="16" height="12" fill="#000"/><rect x="16" y="17" width="13" height="2" fill="#8484e4"/><rect x="16" y="19" width="13" height="7" fill="#fff"/><rect x="16" y="17" width="1" height="1" fill="#fff"/><rect x="17" y="21" width="4" height="4" fill="#000"/><path d="M18 23h1v1h-1zM19 22h1v1h-1zM21 20h1v1h-1z" fill="#fff"/><path d="M21 20h1v1h-1z" fill="#000"/><rect x="24" y="21" width="4" height="4" fill="#000"/><rect x="25" y="22" width="2" height="2" fill="#fff"/></svg>
<div style="left:81px;top:433px;width:33px;height:33px;border:1px solid #ffffff"></div>
<div style="left:80px;top:432px;width:33px;height:33px;border:1px solid #666666"></div>
<svg style="left:80px;top:432px" width="36" height="36" viewBox="0 0 36 36"><rect x="9" y="9" width="3" height="1" fill="#f00000"/><rect x="10" y="8" width="1" height="3" fill="#f00000"/><rect x="12" y="12" width="3" height="1" fill="#f00000"/><rect x="13" y="11" width="1" height="3" fill="#f00000"/><rect x="9" y="14" width="3" height="1" fill="#f00000"/><rect x="10" y="13" width="1" height="3" fill="#f00000"/><rect x="15" y="16" width="3" height="1" fill="#f00000"/><rect x="16" y="15" width="1" height="3" fill="#f00000"/><rect x="7" y="19" width="3" height="1" fill="#f00000"/><rect x="8" y="18" width="1" height="3" fill="#f00000"/><rect x="13" y="24" width="3" height="1" fill="#f00000"/><rect x="14" y="23" width="1" height="3" fill="#f00000"/><rect x="10" y="27" width="3" height="1" fill="#f00000"/><rect x="11" y="26" width="1" height="3" fill="#f00000"/><rect x="20" y="11" width="3" height="1" fill="#f00000"/><rect x="21" y="10" width="1" height="3" fill="#f00000"/><path d="M17 7h1v1h-1zM16 8h1v1h-1zM18 8h1v1h-1zM17 9h1v1h-1z" fill="#1010f0"/><path d="M24 9h1v1h-1zM23 10h1v1h-1zM25 10h1v1h-1zM24 11h1v1h-1z" fill="#1010f0"/><path d="M22 14h1v1h-1zM21 15h1v1h-1zM23 15h1v1h-1zM22 16h1v1h-1z" fill="#1010f0"/><path d="M27 14h1v1h-1zM26 15h1v1h-1zM28 15h1v1h-1zM27 16h1v1h-1z" fill="#1010f0"/><path d="M17 18h1v1h-1zM16 19h1v1h-1zM18 19h1v1h-1zM17 20h1v1h-1z" fill="#1010f0"/><path d="M21 20h1v1h-1zM20 21h1v1h-1zM22 21h1v1h-1zM21 22h1v1h-1z" fill="#1010f0"/><path d="M10 22h1v1h-1zM9 23h1v1h-1zM11 23h1v1h-1zM10 24h1v1h-1z" fill="#1010f0"/><path d="M19 23h1v1h-1zM18 24h1v1h-1zM20 24h1v1h-1zM19 25h1v1h-1z" fill="#1010f0"/><path d="M25 23h3v2h2v3h-2v2h-3v-2h-2v-3h2z" fill="#14a424"/><path d="M26 24h1v2h2v1h-2v2h-1v-2h-2v-1h2z" fill="#68f078"/></svg>
<div style="left:117px;top:433px;width:33px;height:33px;border:1px solid #ffffff"></div>
<div style="left:116px;top:432px;width:33px;height:33px;border:1px solid #666666"></div>
<svg style="left:116px;top:432px" width="36" height="36" viewBox="0 0 36 36"><g shape-rendering="auto" fill="none" stroke="#000" stroke-width="1.200"><path d="M11.800 10.600L18.100 16.900M26.600 14v5.600M11.600 25.400h4.500"/><circle cx="10.4" cy="9.2" r="1.800"/><circle cx="19.5" cy="18.3" r="1.800"/><circle cx="26.6" cy="11.8" r="1.800"/><circle cx="26.6" cy="21.8" r="1.800"/><circle cx="9.4" cy="25.4" r="1.800"/><circle cx="18.3" cy="25.4" r="1.800"/></g><path d="M25 23h3v2h2v3h-2v2h-3v-2h-2v-3h2z" fill="#14a424"/><path d="M26 24h1v2h2v1h-2v2h-1v-2h-2v-1h2z" fill="#68f078"/></svg>
<div style="left:153px;top:433px;width:33px;height:33px;border:1px solid #ffffff"></div>
<div style="left:152px;top:432px;width:33px;height:33px;border:1px solid #666666"></div>
<svg style="left:152px;top:432px" width="36" height="36" viewBox="0 0 36 36"><defs><linearGradient id="hg" x1="0" y1="0" x2="0" y2="1"><stop offset="0" stop-color="#f0c8c8"/><stop offset=".25" stop-color="#e89c9c"/><stop offset=".4" stop-color="#d03030"/><stop offset=".6" stop-color="#c00c0c"/><stop offset=".75" stop-color="#cc2828"/><stop offset=".88" stop-color="#dc7070"/><stop offset="1" stop-color="#ecb0b0"/></linearGradient><radialGradient id="hs" cx=".5" cy=".5" r=".5"><stop offset=".75" stop-color="#fff" stop-opacity="0"/><stop offset="1" stop-color="#fff" stop-opacity=".55"/></radialGradient></defs><circle cx="17.700" cy="17.700" r="10.800" fill="url(#hg)"/><circle cx="17.700" cy="17.700" r="10.800" fill="url(#hs)"/><g font-family="Liberation Sans, sans-serif" fill="#380000" text-anchor="middle"><text x="17.400" y="12.300" font-size="7">3</text><text x="12.400" y="15.200" font-size="7">1</text><text x="20.800" y="16.800" font-size="6.500">2</text><text x="24.800" y="13.300" font-size="4.500">5</text><text x="9.300" y="19.300" font-size="6">4</text><text x="16" y="21" font-size="7.500">0</text><text x="24.300" y="20" font-size="6.500">6</text><text x="19" y="23.300" font-size="4.500">8</text><text x="12.500" y="22.800" font-size="4">7</text><text x="15.500" y="26.500" font-size="4">9</text></g><path d="M25 23h3v2h2v3h-2v2h-3v-2h-2v-3h2z" fill="#14a424"/><path d="M26 24h1v2h2v1h-2v2h-1v-2h-2v-1h2z" fill="#68f078"/></svg>
<div style="left:189px;top:433px;width:33px;height:33px;border:1px solid #ffffff"></div>
<div style="left:188px;top:432px;width:33px;height:33px;border:1px solid #666666"></div>
<svg style="left:188px;top:432px" width="36" height="36" viewBox="0 0 36 36"><defs><radialGradient id="sg" cx=".42" cy=".38" r=".7"><stop offset="0" stop-color="#ffffff"/><stop offset=".75" stop-color="#f4f4f4"/><stop offset="1" stop-color="#c8c8c8"/></radialGradient></defs><circle cx="18" cy="18" r="10.700" fill="url(#sg)" stroke="#5070d8" stroke-width=".8"/><g fill="none" stroke="#cfc8c0" stroke-width=".7"><path d="M11 10C15 13 17 20 15 28M9 16C14 16 22 19 27 24M23 9C21 14 22 22 25 26M8 21C13 20 21 22 26 26"/></g><g fill="none" stroke="#3868f0" stroke-width=".6"><path d="M20 11.800L8.500 23.500M20 11.800L15 28.300M20 11.800L23 28M20 11.800L28.300 21M20 11.800L23 7.800M20 11.800L8.500 13.500"/><path d="M11 11C14 17 23 18.500 28.300 15M7.800 17C12 24 23 25 28.600 20M9 24C14 28 21 29 26 25.500"/></g><path d="M25 23h3v2h2v3h-2v2h-3v-2h-2v-3h2z" fill="#14a424"/><path d="M26 24h1v2h2v1h-2v2h-1v-2h-2v-1h2z" fill="#68f078"/></svg>
<div style="left:235px;top:433px;width:33px;height:33px;border:1px solid #ffffff"></div>
<div style="left:234px;top:432px;width:33px;height:33px;border:1px solid #666666"></div>
<svg style="left:234px;top:432px" width="36" height="36" viewBox="0 0 36 36"><g shape-rendering="auto"><rect x="15.500" y="8.500" width="5" height="2" fill="#f8e0d0" stroke="#000" stroke-width="1"/><path d="M11.500 14l1.200 13.500h10.600L24.500 14z" fill="#e8b090" stroke="#000" stroke-width="1.200"/><rect x="10.500" y="10.500" width="15" height="3" rx="1" fill="#f0c4a8" stroke="#000" stroke-width="1.200"/><path d="M14.800 15.500l.4 11M18 15.500v11M21.200 15.500l-.4 11" stroke="#000" stroke-width="1.300"/><path d="M13.300 15.500l.5 11M16.400 15.500v11M19.600 15.500v11" stroke="#fff0e0" stroke-width=".8"/></g></svg>
<div style="left:18px;top:470px;width:121px;height:188px;background:#ffffff"></div>
<div style="left:18px;top:470px;width:121px;height:1px;background:#666666"></div>
<div style="left:18px;top:470px;width:1px;height:188px;background:#666666"></div>
<div class="t" style="left:48px;top:478px;">Frame</div>
<div class="t" style="left:48px;top:504px;">Legend</div>
<div class="t" style="left:48px;top:530px;">Axes</div>
<div class="t" style="left:48px;top:556px;">STILTS</div>
<svg style="left:19px;top:471px" width="26" height="26" viewBox="0 0 26 26"><rect x="3" y="2" width="22" height="1" fill="#444"/><rect x="24" y="2" width="1" height="20" fill="#444"/><rect x="6" y="3" width="18" height="17" fill="#fff"/><rect x="6" y="8" width="18" height="1" fill="#444"/><rect x="3" y="2" width="3" height="20" fill="#000"/><rect x="3" y="20" width="22" height="2" fill="#000"/><text x="15.300" y="7" text-anchor="middle" font-family="Liberation Sans, sans-serif" font-weight="bold" font-size="4.400" letter-spacing=".55" fill="#000">TITLE</text><path d="M1 2h1v1h-1zM2 2h1v1h-1zM1 5h1v1h-1zM2 5h1v1h-1zM2 4h1v1h-1zM1 17h1v1h-1zM2 17h1v1h-1zM2 18h1v1h-1zM1 20h1v1h-1zM2 20h1v1h-1z" fill="#000"/><rect x="5" y="22" width="4" height="1" fill="#000"/><rect x="6" y="23" width="2" height="2" fill="#000"/><rect x="21" y="22" width="4" height="1" fill="#000"/><rect x="22" y="23" width="2" height="2" fill="#000"/></svg>
<svg style="left:19px;top:497px" width="26" height="26" viewBox="0 0 26 26"><rect x="1.500" y="1.500" width="23" height="23" fill="#e8e8e8" stroke="#666" shape-rendering="crispEdges"/><circle cx="7.500" cy="6.500" r="2.100" fill="none" stroke="#f00000" stroke-width="1.200"/><rect x="5" y="13" width="5" height="1" fill="#0000f0"/><rect x="7" y="11" width="1" height="5" fill="#0000f0"/><path d="M5 18h1v1h-1zM6 19h1v1h-1zM7 20h1v1h-1zM8 21h1v1h-1zM9 22h1v1h-1zM9 18h1v1h-1zM8 19h1v1h-1zM6 21h1v1h-1zM5 22h1v1h-1z" fill="#10b010"/><g font-family="Liberation Mono, monospace" font-weight="bold" font-size="8.200" fill="#000"><text x="13" y="9">Aa</text><text x="13" y="16">Bb</text><text x="13" y="23">Cc</text></g></svg>
<svg style="left:19px;top:523px" width="26" height="26" viewBox="0 0 26 26"><rect x="6" y="2" width="18" height="18" fill="#222"/><rect x="8" y="3" width="15" height="15" fill="#bcbcbc"/><rect x="8" y="3" width="3" height="3" fill="#fff"/><rect x="8" y="7" width="3" height="3" fill="#fff"/><rect x="8" y="11" width="3" height="3" fill="#fff"/><rect x="8" y="15" width="3" height="3" fill="#fff"/><rect x="12" y="3" width="3" height="3" fill="#fff"/><rect x="12" y="7" width="3" height="3" fill="#fff"/><rect x="12" y="11" width="3" height="3" fill="#fff"/><rect x="12" y="15" width="3" height="3" fill="#fff"/><rect x="16" y="3" width="3" height="3" fill="#fff"/><rect x="16" y="7" width="3" height="3" fill="#fff"/><rect x="16" y="11" width="3" height="3" fill="#fff"/><rect x="16" y="15" width="3" height="3" fill="#fff"/><rect x="20" y="3" width="3" height="3" fill="#fff"/><rect x="20" y="7" width="3" height="3" fill="#fff"/><rect x="20" y="11" width="3" height="3" fill="#fff"/><rect x="20" y="15" width="3" height="3" fill="#fff"/><rect x="6" y="2" width="2" height="18" fill="#000"/><rect x="6" y="18" width="18" height="2" fill="#000"/><path d="M8 6h1v1h-1zM8 10h1v1h-1zM8 14h1v1h-1zM11 17h1v1h-1zM15 17h1v1h-1zM19 17h1v1h-1z" fill="#000"/><text x="14.500" y="25" text-anchor="middle" font-family="Liberation Sans, sans-serif" font-weight="bold" font-size="7.300" fill="#000">xxx</text><text transform="translate(4.600 11.500) rotate(-90)" text-anchor="middle" font-family="Liberation Sans, sans-serif" font-weight="bold" font-size="7.300" fill="#000">yyy</text></svg>
<svg style="left:19px;top:549px" width="26" height="26" viewBox="0 0 26 26"><rect x="1" y="3" width="24" height="20" fill="#cccccc"/><g font-family="Liberation Sans, sans-serif" font-size="9.500" fill="#000"><text x="1" y="12" font-size="11.500">&gt;</text><text x="1" y="21.500" font-size="11.500">&gt;</text><text x="7" y="21">stilts</text></g></svg>
<div style="left:19px;top:575px;width:116px;height:79px;border:1px solid #80808c"></div>
<div style="left:20px;top:576px;width:116px;height:27px;background:#ccccff;border-bottom:1px solid #80808c"></div>
<svg style="left:19px;top:576px" width="60" height="28" viewBox="0 0 60 28"><path d="M7.500 5L12.500 10H9.500V11.500H5.500V10H2.500zM7.500 24L12.500 19H9.500V17.500H5.500V19H2.500z" fill="#333"/><rect x="5" y="12" width="5" height="1" fill="#333"/><rect x="5" y="14" width="5" height="1" fill="#333"/><rect x="5" y="16" width="5" height="1" fill="#333"/><g shape-rendering="crispEdges"><rect x="18.500" y="9.500" width="11" height="11" fill="none" stroke="#fff"/><rect x="17.500" y="8.500" width="11" height="11" fill="none" stroke="#666"/></g><path d="M20.500 14.500L23 17L27.500 11" fill="none" stroke="#000" stroke-width="2"/><defs><radialGradient id="sg2" cx=".42" cy=".38" r=".7"><stop offset="0" stop-color="#ffffff"/><stop offset=".75" stop-color="#f4f4f4"/><stop offset="1" stop-color="#c8c8c8"/></radialGradient></defs><g transform="translate(28.200 -4.300) translate(18 18) scale(.98) translate(-18 -18)"><circle cx="18" cy="18" r="10.700" fill="url(#sg2)" stroke="#5070d8" stroke-width=".8"/><g fill="none" stroke="#cfc8c0" stroke-width=".7"><path d="M11 10C15 13 17 20 15 28M9 16C14 16 22 19 27 24M23 9C21 14 22 22 25 26M8 21C13 20 21 22 26 26"/></g><g fill="none" stroke="#3868f0" stroke-width=".6"><path d="M20 11.800L8.500 23.500M20 11.800L15 28.300M20 11.800L23 28M20 11.800L28.300 21M20 11.800L23 7.800M20 11.800L8.500 13.500"/><path d="M11 11C14 17 23 18.500 28.300 15M7.800 17C12 24 23 25 28.600 20M9 24C14 28 21 29 26 25.500"/></g></g></svg>
<div class="t" style="left:80px;top:584px;">SkyGrid</div>
<svg style="left:141px;top:473px" width="4" height="182" viewBox="0 0 4 182" shape-rendering="crispEdges"><defs><pattern id="b141_473" x="0" y="0" width="4" height="4" patternUnits="userSpaceOnUse"><path d="M0 0h1v1h-1zM2 2h1v1h-1z" fill="#ffffff"/><path d="M1 1h1v1h-1zM3 3h1v1h-1z" fill="#666666"/></pattern></defs><rect width="4" height="182" fill="url(#b141_473)"/></svg>
<div style="left:147px;top:470px;width:445px;height:1px;background:#666666"></div>
<div style="left:147px;top:470px;width:1px;height:188px;background:#666666"></div>
<svg style="left:148px;top:473px" width="60" height="22" viewBox="0 0 60 22" shape-rendering="crispEdges"><path d="M2.500 20.500V8.500L8.500 2.500H52.500V20.500" fill="none" stroke="#666"/><path d="M3.500 20.500V9L9 3.500H52" fill="none" stroke="#fff"/></svg>
<div class="t" style="left:159px;top:478px;">Style</div>
<div style="left:148px;top:493px;width:443px;height:1px;background:#ffffff"></div>
<div style="left:148px;top:493px;width:1px;height:164px;background:#ffffff"></div>
<div style="left:148px;top:656px;width:443px;height:1px;background:#666666"></div>
<div style="left:590px;top:493px;width:1px;height:164px;background:#666666"></div>
<div style="left:591px;top:493px;width:1px;height:165px;background:#ffffff"></div>
<div style="left:148px;top:657px;width:444px;height:1px;background:#ffffff"></div>
<div style="left:151px;top:496px;width:435px;height:156px;border:1px solid #ffffff"></div>
<div style="left:150px;top:495px;width:435px;height:156px;border:1px solid #666666"></div>
<div class="t r" style="left:150px;width:167px;top:506px;">Sky System:</div>
<div class="t r" style="left:150px;width:167px;top:534px;">Grid Color:</div>
<div class="t r" style="left:150px;width:167px;top:558px;">Transparency:</div>
<div class="t r" style="left:150px;width:167px;top:582px;">Label Position:</div>
<div class="t r" style="left:150px;width:167px;top:605px;letter-spacing:.11px;">Longitude Grid Crowding:</div>
<div class="t r" style="left:150px;width:167px;top:625px;">Latitude Grid Crowding:</div>
<div style="left:326px;top:502px;width:107px;height:21px;border:1px solid #ffffff"></div>
<div style="left:325px;top:501px;width:107px;height:21px;border:1px solid #666666"></div>
<div class="t" style="left:331px;top:506px;letter-spacing:-.05px">galactic</div>
<svg style="left:418px;top:510px" width="10" height="6" viewBox="0 0 10 6" shape-rendering="crispEdges"><path d="M0 0h10v1h-1v1h-1v1h-1v1h-1v1h-2v-1h-1v-1h-1v-1h-1v-1h-1z" fill="#000"/></svg>
<div style="left:441px;top:502px;width:10px;height:21px;border:1px solid #ffffff"></div>
<div style="left:440px;top:501px;width:10px;height:21px;border:1px solid #666666"></div>
<div style="left:454px;top:502px;width:10px;height:21px;border:1px solid #ffffff"></div>
<div style="left:453px;top:501px;width:10px;height:21px;border:1px solid #666666"></div>
<svg style="left:440px;top:501px" width="26" height="24" viewBox="0 0 26 24" shape-rendering="crispEdges"><path d="M9 7v11h-1v-1h-1v-1h-1v-1h-1v-1h-1v-3h1v-1h1v-1h1v-1h1v-1z" fill="#000"/><path d="M17 7v11h1v-1h1v-1h1v-1h1v-1h1v-3h-1v-1h-1v-1h-1v-1h-1v-1z" fill="#000"/></svg>
<div style="left:326px;top:530px;width:57px;height:21px;border:1px solid #ffffff"></div>
<div style="left:325px;top:529px;width:57px;height:21px;border:1px solid #666666"></div>
<div style="left:330px;top:534px;width:24px;height:12px;background:#ff00ff"></div>
<svg style="left:368px;top:538px" width="10" height="6" viewBox="0 0 10 6" shape-rendering="crispEdges"><path d="M0 0h10v1h-1v1h-1v1h-1v1h-1v1h-2v-1h-1v-1h-1v-1h-1v-1h-1z" fill="#000"/></svg>
<div style="left:391px;top:530px;width:10px;height:21px;border:1px solid #ffffff"></div>
<div style="left:390px;top:529px;width:10px;height:21px;border:1px solid #666666"></div>
<div style="left:404px;top:530px;width:10px;height:21px;border:1px solid #ffffff"></div>
<div style="left:403px;top:529px;width:10px;height:21px;border:1px solid #666666"></div>
<svg style="left:390px;top:529px" width="26" height="24" viewBox="0 0 26 24" shape-rendering="crispEdges"><path d="M9 7v11h-1v-1h-1v-1h-1v-1h-1v-1h-1v-3h1v-1h1v-1h1v-1h1v-1z" fill="#000"/><path d="M17 7v11h1v-1h1v-1h1v-1h1v-1h1v-3h-1v-1h-1v-1h-1v-1h-1v-1z" fill="#000"/></svg>
<div style="left:427px;top:530px;width:21px;height:21px;border:1px solid #ffffff"></div>
<div style="left:426px;top:529px;width:21px;height:21px;border:1px solid #666666"></div>
<div style="left:429px;top:532px;width:18px;height:18px;border-radius:50%;background:conic-gradient(from 0deg,#f4e21c 0deg 30deg,#ffc400 30deg 60deg,#ff9408 60deg 90deg,#f4501c 90deg 120deg,#e02428 120deg 150deg,#b0207c 150deg 180deg,#78309c 180deg 210deg,#4834a4 210deg 240deg,#2458c4 240deg 270deg,#1494d4 270deg 300deg,#34a848 300deg 330deg,#a4d42c 330deg 360deg)"></div>
<div style="left:332px;top:562px;width:215px;height:6px;background:#666666"></div>
<div style="left:333px;top:563px;width:213px;height:4px;background:#cccccc"></div>
<div style="left:333px;top:563px;width:213px;height:1px;background:#999999"></div>
<div style="left:333px;top:563px;width:1px;height:4px;background:#999999"></div>
<div style="left:333px;top:568px;width:215px;height:1px;background:#ffffff"></div>
<div style="left:547px;top:563px;width:1px;height:6px;background:#ffffff"></div>
<svg style="left:325px;top:557px" width="15" height="16" viewBox="0 0 15 16" shape-rendering="crispEdges"><path d="M.5 .5h14v8.500l-7 7-7-7z" fill="#ccc" stroke="#000"/><path d="M1.500 8.500V1.500h12" fill="none" stroke="#fff"/><path d="M4 3h1v1h-1zM8 3h1v1h-1zM12 3h1v1h-1zM6 5h1v1h-1zM10 5h1v1h-1zM4 7h1v1h-1zM8 7h1v1h-1zM12 7h1v1h-1z" fill="#333"/><path d="M3 2h1v1h-1zM7 2h1v1h-1zM11 2h1v1h-1zM5 4h1v1h-1zM9 4h1v1h-1zM3 6h1v1h-1zM7 6h1v1h-1zM11 6h1v1h-1z" fill="#fff"/></svg>
<div style="left:561px;top:558px;width:18px;height:13px;border:1px solid #ffffff"></div>
<div style="left:560px;top:557px;width:18px;height:13px;border:1px solid #666666"></div>
<svg style="left:560px;top:557px" width="21" height="16" viewBox="0 0 21 16" shape-rendering="crispEdges"><path d="M4 5h1v1h1v1h2v2h-2v1h-1v1h-1zM17 5h-1v1h-1v1h-2v2h2v1h1v1h1z" fill="#1070b0"/><path d="M8 4h5v8h-5z" fill="#000"/><path d="M10 6h1v4h-1z" fill="#6090c0"/></svg>
<div style="left:332px;top:609px;width:215px;height:6px;background:#666666"></div>
<div style="left:333px;top:610px;width:213px;height:4px;background:#cccccc"></div>
<div style="left:333px;top:610px;width:213px;height:1px;background:#999999"></div>
<div style="left:333px;top:610px;width:1px;height:4px;background:#999999"></div>
<div style="left:333px;top:615px;width:215px;height:1px;background:#ffffff"></div>
<div style="left:547px;top:610px;width:1px;height:6px;background:#ffffff"></div>
<svg style="left:427px;top:604px" width="15" height="16" viewBox="0 0 15 16" shape-rendering="crispEdges"><path d="M.5 .5h14v8.500l-7 7-7-7z" fill="#ccc" stroke="#000"/><path d="M1.500 8.500V1.500h12" fill="none" stroke="#fff"/><path d="M4 3h1v1h-1zM8 3h1v1h-1zM12 3h1v1h-1zM6 5h1v1h-1zM10 5h1v1h-1zM4 7h1v1h-1zM8 7h1v1h-1zM12 7h1v1h-1z" fill="#333"/><path d="M3 2h1v1h-1zM7 2h1v1h-1zM11 2h1v1h-1zM5 4h1v1h-1zM9 4h1v1h-1zM3 6h1v1h-1zM7 6h1v1h-1zM11 6h1v1h-1z" fill="#fff"/></svg>
<div style="left:561px;top:605px;width:18px;height:13px;border:1px solid #ffffff"></div>
<div style="left:560px;top:604px;width:18px;height:13px;border:1px solid #666666"></div>
<svg style="left:560px;top:604px" width="21" height="16" viewBox="0 0 21 16" shape-rendering="crispEdges"><path d="M4 5h1v1h1v1h2v2h-2v1h-1v1h-1zM17 5h-1v1h-1v1h-2v2h2v1h1v1h1z" fill="#1070b0"/><path d="M8 4h5v8h-5z" fill="#000"/><path d="M10 6h1v4h-1z" fill="#6090c0"/></svg>
<div style="left:332px;top:629px;width:215px;height:6px;background:#666666"></div>
<div style="left:333px;top:630px;width:213px;height:4px;background:#cccccc"></div>
<div style="left:333px;top:630px;width:213px;height:1px;background:#999999"></div>
<div style="left:333px;top:630px;width:1px;height:4px;background:#999999"></div>
<div style="left:333px;top:635px;width:215px;height:1px;background:#ffffff"></div>
<div style="left:547px;top:630px;width:1px;height:6px;background:#ffffff"></div>
<svg style="left:427px;top:624px" width="15" height="16" viewBox="0 0 15 16" shape-rendering="crispEdges"><path d="M.5 .5h14v8.500l-7 7-7-7z" fill="#ccc" stroke="#000"/><path d="M1.500 8.500V1.500h12" fill="none" stroke="#fff"/><path d="M4 3h1v1h-1zM8 3h1v1h-1zM12 3h1v1h-1zM6 5h1v1h-1zM10 5h1v1h-1zM4 7h1v1h-1zM8 7h1v1h-1zM12 7h1v1h-1z" fill="#333"/><path d="M3 2h1v1h-1zM7 2h1v1h-1zM11 2h1v1h-1zM5 4h1v1h-1zM9 4h1v1h-1zM3 6h1v1h-1zM7 6h1v1h-1zM11 6h1v1h-1z" fill="#fff"/></svg>
<div style="left:561px;top:625px;width:18px;height:13px;border:1px solid #ffffff"></div>
<div style="left:560px;top:624px;width:18px;height:13px;border:1px solid #666666"></div>
<svg style="left:560px;top:624px" width="21" height="16" viewBox="0 0 21 16" shape-rendering="crispEdges"><path d="M4 5h1v1h1v1h2v2h-2v1h-1v1h-1zM17 5h-1v1h-1v1h-2v2h2v1h1v1h1z" fill="#1070b0"/><path d="M8 4h5v8h-5z" fill="#000"/><path d="M10 6h1v4h-1z" fill="#6090c0"/></svg>
<svg style="left:329px;top:582px" width="14" height="14" viewBox="0 0 14 14" ><circle cx="6" cy="6" r="6.500" fill="none" stroke="#fff" stroke-width="1" transform="translate(.7 .7)"/><circle cx="6" cy="6" r="5.500" fill="#ccc" stroke="#5c5c5c" stroke-width="1.100"/><circle cx="6" cy="6" r="4.500" fill="none" stroke="#fff" stroke-width="1"/><circle cx="6" cy="6" r="3.100" fill="#000"/></svg>
<div class="t" style="left:346px;top:582px;">Internal</div>
<svg style="left:412px;top:582px" width="14" height="14" viewBox="0 0 14 14" ><circle cx="6" cy="6" r="6.500" fill="none" stroke="#fff" stroke-width="1" transform="translate(.7 .7)"/><circle cx="6" cy="6" r="5.500" fill="#ccc" stroke="#5c5c5c" stroke-width="1.100"/><circle cx="6" cy="6" r="4.500" fill="none" stroke="#fff" stroke-width="1"/></svg>
<div class="t" style="left:429px;top:582px;">None</div>
<div style="left:18px;top:664px;width:281px;height:16px;border:1px solid #ffffff"></div>
<div style="left:17px;top:663px;width:281px;height:16px;border:1px solid #666666"></div>
<div style="left:308px;top:664px;width:282px;height:16px;border:1px solid #ffffff"></div>
<div style="left:307px;top:663px;width:282px;height:16px;border:1px solid #666666"></div>
<div class="t" style="left:19px;top:666px;">Position:</div>
<div class="t" style="left:309px;top:666px;">Count: 0 / 0</div>
<div style="left:18px;top:684px;width:12px;height:12px;border:1px solid #ffffff"></div>
<div style="left:17px;top:683px;width:12px;height:12px;border:1px solid #666666"></div>
<div style="left:38px;top:684px;width:12px;height:12px;border:1px solid #ffffff"></div>
<div style="left:37px;top:683px;width:12px;height:12px;border:1px solid #666666"></div>
<svg style="left:17px;top:683px" width="15" height="15" viewBox="0 0 15 15" ><path d="M3.700 3.700L11.300 11.300M11.300 3.700L3.700 11.300" stroke="#1a1a1a" stroke-width="1.900"/></svg>
<div class="t" style="left:37px;top:683px;width:15px;text-align:center;font-family:'Liberation Sans',sans-serif;font-size:12px;color:#111">?</div>
<svg style="left:61px;top:685px" width="17" height="12" viewBox="0 0 17 12" ><rect x=".5" y=".5" width="16" height="11" rx="2.500" fill="#9c9c9c" stroke="#999"/><path d="M2.500 2.500h5.500v7h-5.500zM9.500 2.500h5v2h-5zM9.500 6h5v3.500h-5z" fill="#b8b8b8"/></svg>
<div class="t" style="left:81px;top:685px;color:#999999">Select</div>
<div style="left:7px;top:701px;width:594px;height:12px;border:1px solid #666666"></div>
</div></body></html>
